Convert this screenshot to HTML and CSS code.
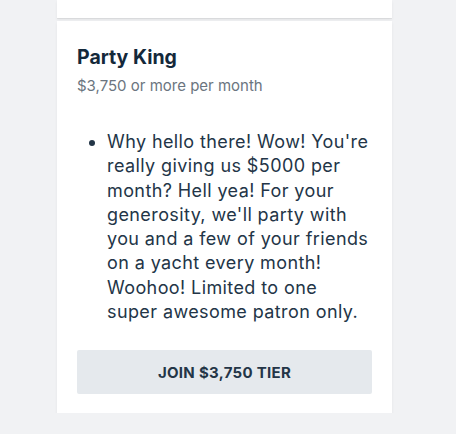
FILE: index.html
```html
<!DOCTYPE html>
<html lang="en">
<head>
  <meta charset="UTF-8" />
  <meta name="viewport" content="width=device-width, initial-scale=1" />
  <title>Tiers</title>
  <link rel="stylesheet" href="styles.css">
</head>
<body>
  <main class="tiers">
    <div class="tier tier-prev"></div>
    <div class="tier">
      <h2 class="tier-name">Party King</h2>
      <div class="tier-price">$3,750 or more per month</div>
      <ul class="tier-desc">
        <li>Why hello there! Wow! You're really giving us $5000 per month? Hell yea! For your generosity, we'll party with you and a few of your friends on a yacht every month! Woohoo! Limited to one super awesome patron only.</li>
      </ul>
      <button class="join-btn">Join $3,750 tier</button>
    </div>
  </main>
</body>
</html>
```

FILE: styles.css
```css
* { box-sizing: border-box; }
body { margin: 0; background: #f1f2f4; font-family: Inter, "Liberation Sans", sans-serif; color: #1f3143; }
.tiers { width: 335px; margin-left: 57px; display: flex; flex-direction: column; gap: 3px; }
.tier { background: #fff; padding: 23px 20px 19px; box-shadow: 0 1px 0 rgba(0,0,0,0.05), 0 2px 3px rgba(0,0,0,0.06); }
.tier-prev { height: 18px; padding: 0; }
.tier-name { margin: 0; font-size: 19.5px; line-height: 26px; font-weight: 700; color: #14283a; }
.tier-price { margin-top: 6px; font-size: 15px; line-height: 20px; color: #6b7580; }
.tier-desc { margin: 34px 0 0; padding: 0 0 0 30px; font-size: 18px; line-height: 24.3px; letter-spacing: 0.4px; color: #233547; }
.join-btn { display: block; width: 100%; height: 44px; margin-top: 26px; border: none; border-radius: 2px; background: #e5e9ed; color: #233547; font-family: inherit; font-size: 15px; letter-spacing: 0.3px; font-weight: 700; text-transform: uppercase; cursor: pointer; }
```
